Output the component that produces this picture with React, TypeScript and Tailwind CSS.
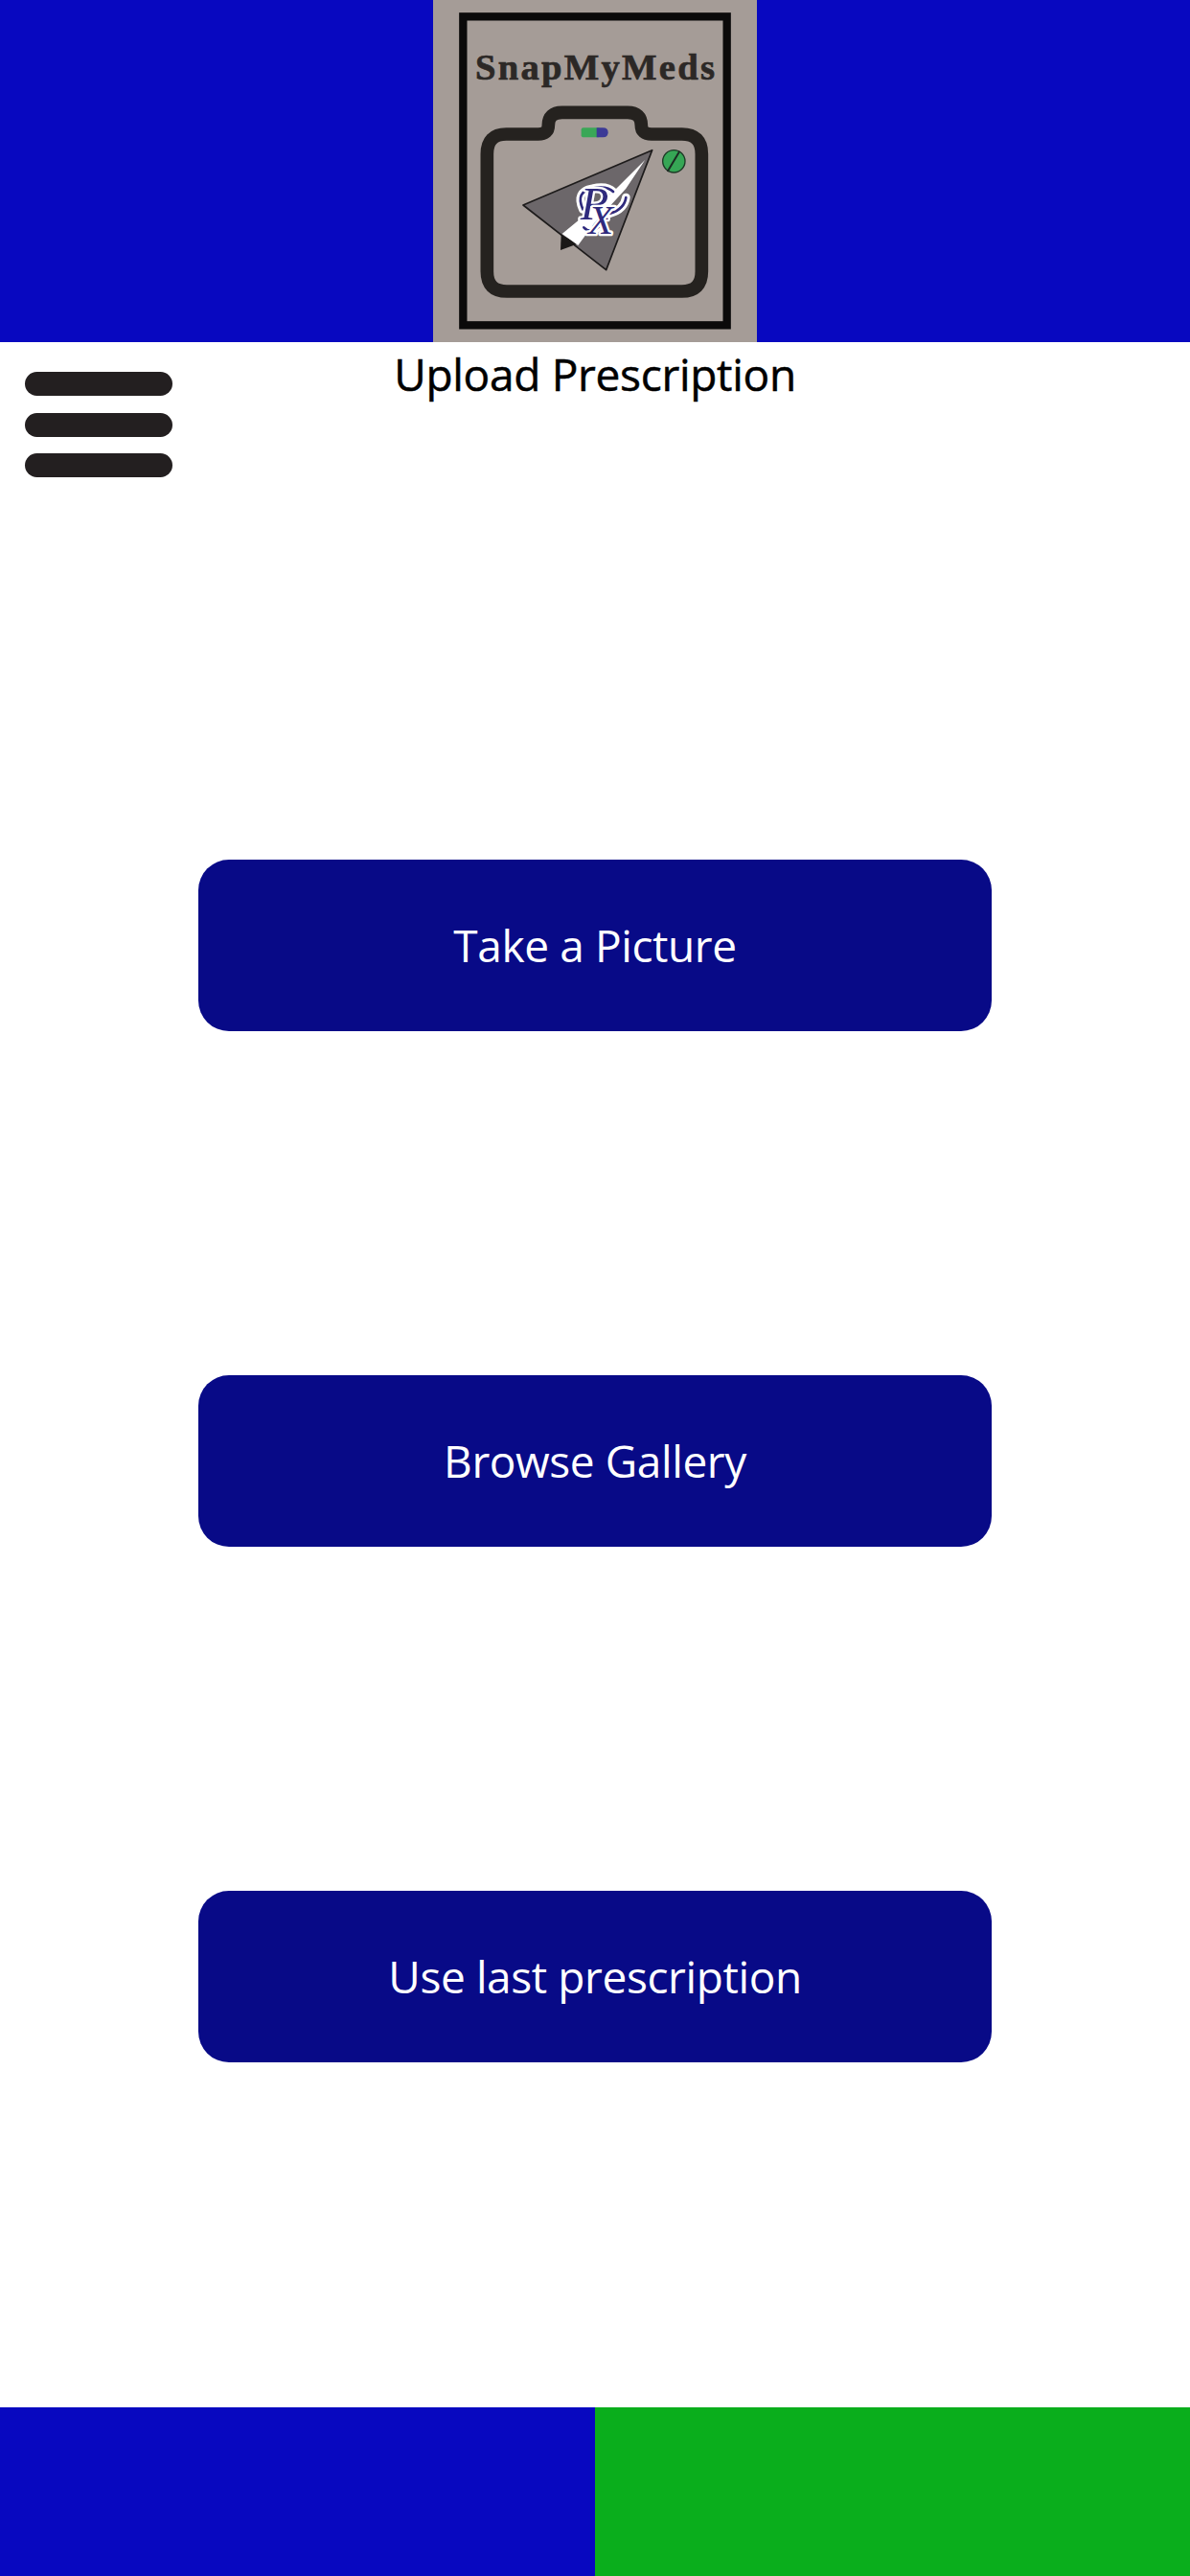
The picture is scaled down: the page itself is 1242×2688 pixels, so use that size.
function Logo() {
  return (
    <svg viewBox="36 0 1014 1071" className="h-full w-full" aria-label="SnapMyMeds logo">
      <rect x="36" y="0" width="1014" height="1071" fill="#a59c97" />
      <rect x="130" y="52" width="826" height="966" fill="none" stroke="#0b0a0a" strokeWidth="25" />
      <text
        x="168"
        y="248"
        textLength="750"
        fontFamily="'Liberation Serif', serif"
        fontWeight="700"
        fontSize="116"
        fill="#2c2826"
        stroke="#2c2826"
        strokeWidth="2"
      >
        SnapMyMeds
      </text>
      <path
        d="M265 420H365Q397 420 397 392Q397 352 440 352H645Q688 352 688 392Q688 420 720 420H815Q877 420 877 482V850Q877 912 815 912H267Q205 912 205 850V482Q205 420 265 420Z"
        fill="none"
        stroke="#25221f"
        strokeWidth="41"
      />
      <rect x="500" y="400" width="60" height="30" rx="6" fill="#3aa757" />
      <path d="M548 400H568Q584 400 584 415Q584 430 568 430H548Z" fill="#3c3a96" />
      <circle cx="790" cy="505" r="35" fill="#36a655" stroke="#1d3a26" strokeWidth="4" />
      <path d="M770 537L808 473" stroke="#1c2a22" strokeWidth="6" />
      <path d="M722 470L318 642L578 845Z" fill="#6c676a" stroke="#1d1b1b" strokeWidth="5" strokeLinejoin="round" />
      <path d="M437 735L435 783L492 762Z" fill="#1a1817" />
      <path d="M700 500L600 600L440 732L490 768L540 700L640 590Z" fill="#ffffff" />
      {/* swashes of the Rx mark, white outline first */}
      <g fill="none" strokeLinecap="round">
        <path d="M505 655Q480 600 535 590Q580 580 600 600M590 668Q635 655 640 618M508 712Q530 735 560 705" stroke="#ffffff" strokeWidth="26" />
        <path d="M505 655Q480 600 535 590Q580 580 600 600M590 668Q635 655 640 618M508 712Q530 735 560 705" stroke="#2f2a7d" strokeWidth="8" />
      </g>
      <g
        fontFamily="'Liberation Serif', serif"
        fontStyle="italic"
        fill="#2f2a7d"
        stroke="#ffffff"
        strokeWidth="14"
        paintOrder="stroke"
        strokeLinejoin="round"
      >
        <text x="497" y="686" fontSize="146">R</text>
        <text x="522" y="732" fontSize="128">X</text>
      </g>
    </svg>
  )
}

function ActionButton({ label }: { label: string }) {
  return (
    <button className="flex h-[179px] w-[828px] items-center justify-center rounded-[32px] bg-[#080a87] text-[46px] tracking-[-0.4px] text-white">
      {label}
    </button>
  )
}

export default function App() {
  return (
    <div className="flex h-[2688px] w-[1242px] flex-col bg-white font-['Open_Sans',sans-serif]">
      <header className="flex h-[357px] shrink-0 justify-center bg-[#0808c0]">
        <div className="h-full w-[338px]">
          <Logo />
        </div>
      </header>

      <main className="relative flex flex-1 flex-col items-center">
        <h1 className="mt-[2px] text-[46px] leading-[62px] font-normal tracking-[-0.3px] text-black [-webkit-text-stroke:0.5px_black]">
          Upload Prescription
        </h1>
        <button className="absolute top-[31px] left-[26px] flex w-[154px] flex-col gap-[17.5px]" aria-label="Menu">
          <span className="h-[25px] rounded-full bg-[#231f20]" />
          <span className="h-[25px] rounded-full bg-[#231f20]" />
          <span className="h-[25px] rounded-full bg-[#231f20]" />
        </button>

        <div className="mt-[476px] flex flex-col gap-[359px]">
          <ActionButton label="Take a Picture" />
          <ActionButton label="Browse Gallery" />
          <ActionButton label="Use last prescription" />
        </div>
      </main>

      <footer className="flex h-[176px] shrink-0">
        <div className="flex-1 bg-[#0808c0]" />
        <div className="flex-1 bg-[#0aae1c]" />
      </footer>
    </div>
  )
}
